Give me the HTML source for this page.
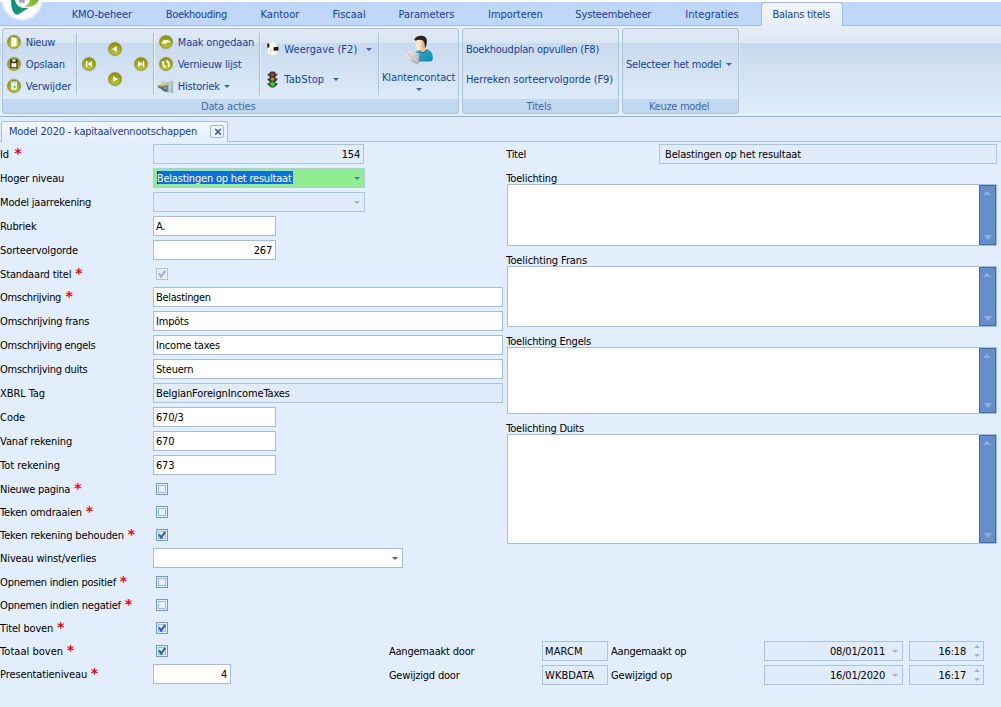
<!DOCTYPE html>
<html lang="nl"><head><meta charset="utf-8"><title>Balans titels</title>
<style>
html,body{margin:0;padding:0}
body{width:1001px;height:707px;overflow:hidden;position:relative;background:#e3eefd;font-family:"DejaVu Sans Condensed","Liberation Sans",sans-serif;font-size:11px;letter-spacing:-0.2px;color:#000;-webkit-font-smoothing:antialiased}
.a{position:absolute;white-space:nowrap;line-height:14px}
.t{position:absolute;white-space:nowrap;line-height:14px;height:14px}
.b{color:#16419a}
.cap{color:#3e6aaa;text-align:center}
.f{position:absolute;box-sizing:border-box;border:1px solid #a3bde3;background:#fff;height:20px}
.ro{background:#e1ecfb;border-color:#abc3e3}
.f span{position:absolute;top:3px;line-height:14px;white-space:nowrap}
.f .l{left:2px}.f .r{right:3px}
.ast{position:absolute;color:#ff0000;font-family:"DejaVu Sans","Liberation Sans",sans-serif;font-weight:bold;font-size:14px;line-height:14px;letter-spacing:0}
.cb{position:absolute;box-sizing:border-box;width:12px;height:12px;border:1px solid #6b9ad9;background:#e9f1fc;box-shadow:inset 0 0 0 1px #e6effc, inset 0 0 0 2px #9dbce6}
.cb svg{position:absolute;left:0;top:0}
.cbd{border-color:#b1c1d8;background:#f0f5fb;box-shadow:inset 0 0 0 1px #eef3fa, inset 0 0 0 2px #dfe7f2}
.sep{position:absolute;width:1px;background:#a5bddc;top:33px;height:62px;box-shadow:1px 0 0 rgba(255,255,255,.55)}
.grp{position:absolute;top:28px;height:86px;box-sizing:border-box;border:1px solid #a9c1de;border-radius:3px;background:linear-gradient(#dfe9f5 0,#dae5f3 14px,#c9daee 14px,#dcebf8 70px,#c3d9f1 70px,#c1d7f0 100%);box-shadow:0 0 0 1px rgba(255,255,255,.5)}
.sb{position:absolute;box-sizing:border-box;width:17px;background:#668ec8;border:1px solid #416aa9}
.ar{position:absolute;width:0;height:0;border-left:3px solid transparent;border-right:3px solid transparent;border-top:3px solid #3c67a8}
svg{position:absolute;overflow:visible}
</style></head><body>

<div class="a" style="left:0;top:0;width:1001px;height:2px;background:#fff"></div>
<div class="a" style="left:0;top:2px;width:1001px;height:23px;background:#bed7fb"></div>
<div class="a" style="left:0;top:25px;width:1001px;height:92px;background:linear-gradient(#e6eef8 0,#dde8f4 17px,#c7d8ed 17px,#d3e3f3 55%,#e0eefa 100%);border-top:1px solid #9fc0ea;border-bottom:1px solid #8db2e3;box-sizing:border-box"></div>
<div class="a" style="left:761px;top:2px;width:82px;height:24px;box-sizing:border-box;border:1px solid #9dbde6;border-bottom:none;border-radius:4px 4px 0 0;background:linear-gradient(#f1f5fb,#e6eef8)"></div>
<div class="t b" style="left:71.7px;top:8px;letter-spacing:-0.13px">KMO-beheer</div>
<div class="t b" style="left:165.7px;top:8px;letter-spacing:-0.32px">Boekhouding</div>
<div class="t b" style="left:260.5px;top:8px;letter-spacing:0.02px">Kantoor</div>
<div class="t b" style="left:332.5px;top:8px;letter-spacing:0.01px">Fiscaal</div>
<div class="t b" style="left:398.6px;top:8px;letter-spacing:-0.10px">Parameters</div>
<div class="t b" style="left:488.1px;top:8px;letter-spacing:-0.04px">Importeren</div>
<div class="t b" style="left:575.3px;top:8px;letter-spacing:-0.15px">Systeembeheer</div>
<div class="t b" style="left:685.3px;top:8px;letter-spacing:0.00px">Integraties</div>
<div class="t b" style="left:772.5px;top:8px;letter-spacing:-0.25px">Balans titels</div>
<svg style="left:0;top:0" width="46" height="24" viewBox="0 0 46 24">
<defs><radialGradient id="lg" cx="50%" cy="50%" r="50%"><stop offset="0.8" stop-color="#fff"/><stop offset="0.9" stop-color="#f1f6fd" stop-opacity=".85"/><stop offset="1" stop-color="#dfe9f6" stop-opacity="0"/></radialGradient>
<linearGradient id="tg" x1="0" x2="1" y1="0" y2="1"><stop offset="0" stop-color="#0b8f86"/><stop offset="1" stop-color="#13a174"/></linearGradient>
<linearGradient id="gg" x1="0" x2="1" y1="1" y2="0"><stop offset="0" stop-color="#9acb3c"/><stop offset="1" stop-color="#6fb52a"/></linearGradient></defs>
<circle cx="22" cy="0" r="21.5" fill="url(#lg)"/>
<path d="M11.3 0 C10.8 5 11.8 10 14 13 C15.5 15 18 15.2 20 13.6 C23 11.6 26 9.6 28.8 7.8 C25 8.3 21 7.9 18.5 6 C16.5 4.5 15.3 2 15.1 0 Z" fill="url(#tg)"/>
<path d="M38.4 0 C38 3 35 5.6 31 6.4 C28.5 6.9 26 6.8 24.3 6.5 C27 5.5 29.6 3 30.2 0 Z" fill="url(#gg)"/>
<path d="M10.6 0 L12 0 L11.6 1.8 Z" fill="#2a8ad8"/>
<rect x="19.4" y="0" width="5.2" height="2.8" rx=".6" fill="#979797"/>
<rect x="21" y="0.6" width="1.8" height="1" fill="#e6e6e6"/>
</svg>
<div class="grp" style="left:2px;width:457px"></div>
<div class="grp" style="left:462px;width:157px"></div>
<div class="grp" style="left:622px;width:117px"></div>
<div class="sep" style="left:76px"></div>
<div class="sep" style="left:153px"></div>
<div class="sep" style="left:259px"></div>
<div class="sep" style="left:378px"></div>
<div class="t cap" style="left:200.9px;top:100px;letter-spacing:-0.13px">Data acties</div>
<div class="t cap" style="left:526.6px;top:100px;letter-spacing:-0.27px">Titels</div>
<div class="t cap" style="left:649.0px;top:100px;letter-spacing:-0.30px">Keuze model</div>
<div class="t b" style="left:25.8px;top:36px;letter-spacing:-0.29px">Nieuw</div>
<div class="t b" style="left:25.8px;top:58px">Opslaan</div>
<div class="t b" style="left:25.8px;top:80px;letter-spacing:-0.07px">Verwijder</div>
<div class="t b" style="left:177.8px;top:36px;letter-spacing:-0.20px">Maak ongedaan</div>
<div class="t b" style="left:177.8px;top:58px;letter-spacing:-0.15px">Vernieuw lijst</div>
<div class="t b" style="left:177.8px;top:80px;letter-spacing:-0.22px">Historiek</div>
<div class="t b" style="left:284.3px;top:43px;letter-spacing:0.05px">Weergave (F2)</div>
<div class="t b" style="left:284.3px;top:73px;letter-spacing:0.13px">TabStop</div>
<div class="t b" style="left:382.0px;top:71px;letter-spacing:-0.12px">Klantencontact</div>
<div class="t b" style="left:466.0px;top:43px;letter-spacing:-0.24px">Boekhoudplan opvullen (F8)</div>
<div class="t b" style="left:466.0px;top:73px;letter-spacing:-0.09px">Herreken sorteervolgorde (F9)</div>
<div class="t b" style="left:626.1px;top:58px;letter-spacing:-0.26px">Selecteer het model</div>
<div class="ar" style="left:224px;top:85px"></div>
<div class="ar" style="left:366px;top:48px"></div>
<div class="ar" style="left:333px;top:78px"></div>
<div class="ar" style="left:416px;top:88px"></div>
<div class="ar" style="left:726px;top:63px"></div>
<svg width="0" height="0"><defs>
<linearGradient id="ol" x1="0" x2="0" y1="0" y2="1"><stop offset="0" stop-color="#8b900d"/><stop offset="0.45" stop-color="#a4a914"/><stop offset="1" stop-color="#c3ca2e"/></linearGradient>
</defs></svg>
<svg style="left:6px;top:34.3px" width="16" height="16" viewBox="-8 -8 16 16"><circle r="7.7" fill="#c4c5bc" opacity=".35"/><circle r="7.1" fill="#b3b4a8" opacity=".9"/><circle r="6.2" fill="url(#ol)" stroke="#80840c" stroke-width=".7"/><path d="M-2.8 -5 L2.6 -4.2 L2.6 4 L-2.8 5 Z" fill="#fff"/><path d="M2.6 -4.2 L3.5 -3.9 L3.5 3.6 L2.6 4Z" fill="#d5d8a6"/></svg>
<svg style="left:6px;top:56.2px" width="16" height="16" viewBox="-8 -8 16 16"><circle r="7.7" fill="#c4c5bc" opacity=".35"/><circle r="7.1" fill="#b3b4a8" opacity=".9"/><circle r="6.2" fill="url(#ol)" stroke="#80840c" stroke-width=".7"/><path d="M-3.8 -4.6 H3.6 V4.2 H-3.8 Z" fill="#333"/><path d="M-2.5 -0.8 H2.4 V3.2 H-2.5 Z" fill="#fff"/><path d="M-1.8 -4.6 H1.6 V-2.4 H-1.8Z" fill="#e4e4e4"/></svg>
<svg style="left:6px;top:78.3px" width="16" height="16" viewBox="-8 -8 16 16"><circle r="7.7" fill="#c4c5bc" opacity=".35"/><circle r="7.1" fill="#b3b4a8" opacity=".9"/><circle r="6.2" fill="url(#ol)" stroke="#80840c" stroke-width=".7"/><path d="M-3.2 -4.4 H3.4 L2.6 4 H-2.4 Z" fill="#e3f0ee"/><path d="M-3.2 -4.4 H3.4 L3.3 -3.2 H-3.1Z" fill="#9fd2e6"/><path d="M-0.6 1.4 L1 -1.2 L1.6 2Z" fill="#4fc23c"/></svg>
<svg style="left:81px;top:56px" width="16" height="16" viewBox="-8 -8 16 16"><circle r="7.7" fill="#c4c5bc" opacity=".35"/><circle r="7.1" fill="#b3b4a8" opacity=".9"/><circle r="6.2" fill="url(#ol)" stroke="#80840c" stroke-width=".7"/><path d="M-3.2 -3 H-1.6 V3 H-3.2Z M3 -3 V3 L-1.6 0Z" fill="#fff"/></svg>
<svg style="left:107.2px;top:41px" width="16" height="16" viewBox="-8 -8 16 16"><circle r="7.7" fill="#c4c5bc" opacity=".35"/><circle r="7.1" fill="#b3b4a8" opacity=".9"/><circle r="6.2" fill="url(#ol)" stroke="#80840c" stroke-width=".7"/><path d="M1.8 -3 V3 L-3 0Z" fill="#fff"/></svg>
<svg style="left:107.2px;top:71px" width="16" height="16" viewBox="-8 -8 16 16"><circle r="7.7" fill="#c4c5bc" opacity=".35"/><circle r="7.1" fill="#b3b4a8" opacity=".9"/><circle r="6.2" fill="url(#ol)" stroke="#80840c" stroke-width=".7"/><path d="M-1.8 -3 V3 L3 0Z" fill="#fff"/></svg>
<svg style="left:133.2px;top:56px" width="16" height="16" viewBox="-8 -8 16 16"><circle r="7.7" fill="#c4c5bc" opacity=".35"/><circle r="7.1" fill="#b3b4a8" opacity=".9"/><circle r="6.2" fill="url(#ol)" stroke="#80840c" stroke-width=".7"/><path d="M3.2 -3 H1.6 V3 H3.2Z M-3 -3 V3 L1.6 0Z" fill="#fff"/></svg>
<svg style="left:158.2px;top:34.3px" width="16" height="16" viewBox="-8 -8 16 16"><circle r="7.7" fill="#c4c5bc" opacity=".35"/><circle r="7.1" fill="#b3b4a8" opacity=".9"/><circle r="6.2" fill="url(#ol)" stroke="#80840c" stroke-width=".7"/><path d="M-4.4 1.6 L-2.4 -2.6 L-1.4 -1.6 C1.4 -2.6 4 -1.4 4.8 0.8 C3 0 1.2 0.2 0 1 L0.6 2 Z" fill="#fff"/></svg>
<svg style="left:158.2px;top:56.099999999999994px" width="16" height="16" viewBox="-8 -8 16 16"><circle r="7.7" fill="#c4c5bc" opacity=".35"/><circle r="7.1" fill="#b3b4a8" opacity=".9"/><circle r="6.2" fill="url(#ol)" stroke="#80840c" stroke-width=".7"/><path d="M-4.6 -1 L-2.8 -3.6 L-1 -1.4 L-2 -1.2 C-2 0.6 -1 1.8 0.2 2.4 L-0.8 4.2 C-3 3.2 -3.8 1.2 -3.6 -1Z M4.6 1 L2.8 3.6 L1 1.4 L2 1.2 C2 -0.6 1 -1.8 -0.2 -2.4 L0.8 -4.2 C3 -3.2 3.8 -1.2 3.6 1Z" fill="#fff"/></svg>
<svg style="left:157px;top:79px" width="18" height="15" viewBox="0 0 18 15">
<defs><linearGradient id="hc" x1="0" x2="1"><stop offset="0" stop-color="#8fa9b1"/><stop offset=".5" stop-color="#c4d7db"/><stop offset="1" stop-color="#8ea7af"/></linearGradient></defs>
<path d="M4.5 2.6 L10 1.2 L15.6 1.9 L16 13.4 L10.6 13.2 L5 10 Z" fill="#9db4bb"/>
<path d="M4.5 2.6 L10 1.2 L15.6 1.9 L10.2 3.2 Z" fill="#e6f0f1"/>
<path d="M10.2 3.2 L15.6 1.9 L16 13.4 L10.6 13.2 Z" fill="url(#hc)"/>
<path d="M4.5 2.6 L10.2 3.2 L10.3 6 L4.6 5.2Z" fill="#b9c9d6"/>
<path d="M0.8 6.6 L8.8 6 L10.4 7 L10.6 13 L6.4 12.2 L3.4 9.6 L0.9 8.6 Z" fill="#5d6d74"/>
<path d="M1 6.8 L8.6 6.4 L9.6 7.4 L2.4 8Z" fill="#8599a3"/>
<ellipse cx="5.6" cy="5.7" rx="2.7" ry="1.25" fill="#f2c81e"/>
<path d="M3.4 5.2 C4.6 4.6 6.6 4.6 7.8 5" stroke="#fbe88a" stroke-width=".6" fill="none"/>
<path d="M7.6 8.4 L9.2 8.2 L9 9.6 L7.4 9.8Z" fill="#dfe6e8"/>
<path d="M16 12.2 L17 13.2 L16 13.6Z" fill="#7c949c"/>
</svg>
<svg style="left:266px;top:40px" width="14" height="17" viewBox="0 0 14 17">
<path d="M2.2 5 C2.2 3 4 2.2 5.4 2.6 L6.4 1.4 L9.2 0.8 L10.2 2.2 L10.4 6.4 L11.6 6.6 L11.8 13.4 C10 15.6 5 16 1.6 14.6 C1.4 11 1.6 8 2.2 5Z" fill="#f6f6f3" stroke="#d4d5d0" stroke-width=".5"/>
<path d="M4.6 8.4 C5 11 5.2 12.4 4.4 13.6" stroke="#c9cbc6" stroke-width=".8" fill="none"/>
<path d="M1.2 4.2 C1.6 3 3 3 3.4 4 L3.4 7 C3 8 1.6 8 1.2 7Z" fill="#1d2a22"/>
<path d="M7.6 7.2 L12.4 6.8 L12.4 10.6 L7.6 10.8Z" fill="#151515"/>
</svg>
<svg style="left:266.5px;top:70.5px" width="11" height="17" viewBox="0 0 11 17">
<path d="M0.4 2.4 L3 3.2 V5.2 L1 4.6Z M10.6 2.4 L8 3.2 V5.2 L10 4.6Z M0.4 7.2 L3 8 V10 L1 9.4Z M10.6 7.2 L8 8 V10 L10 9.4Z M0.4 12 L3 12.8 V14.8 L1 14.2Z M10.6 12 L8 12.8 V14.8 L10 14.2Z" fill="#2c2c2c"/>
<rect x="2.4" y="0.6" width="6.2" height="15.8" rx="1.8" fill="#383838"/>
<circle cx="5.5" cy="3.6" r="1.6" fill="#c7371f"/>
<circle cx="5.5" cy="8.2" r="1.6" fill="#d9900f"/>
<circle cx="5.5" cy="13.2" r="2.7" fill="#2fe52f" opacity=".45"/>
<circle cx="5.5" cy="13.1" r="1.9" fill="#22e022"/>
</svg>
<svg style="left:404px;top:34px" width="32" height="32" viewBox="0 0 32 32">
<defs><linearGradient id="sk" x1="0" x2="1"><stop offset="0" stop-color="#fddcc0"/><stop offset=".45" stop-color="#ffe9d6"/><stop offset="1" stop-color="#e59a68"/></linearGradient>
<linearGradient id="tl" x1="0" x2="1" y1="0" y2="1"><stop offset="0" stop-color="#35b9dc"/><stop offset="1" stop-color="#0b86ad"/></linearGradient>
<linearGradient id="ev" x1="0" x2="1" y1="0" y2="1"><stop offset="0" stop-color="#efefef"/><stop offset=".5" stop-color="#d2d2d2"/><stop offset="1" stop-color="#9d9fa1"/></linearGradient></defs>
<path d="M10 27.6 L10 21 C11 17.6 14 16.2 17 15.7 L22.4 15.3 C26.4 16.2 28.8 19 28.8 24 C28.8 26.6 27.6 27.6 25 27.6 Z" fill="url(#tl)"/>
<path d="M16.4 13.6 L21 13 L22 16.2 C20.4 18.8 17.6 18.6 16 16.6Z" fill="#f3bf96"/>
<path d="M15.4 16.2 C17 19.6 21 19.4 22.8 15.6" stroke="#1c5268" stroke-width=".9" fill="none"/>
<ellipse cx="15.8" cy="10.6" rx="4.7" ry="5.7" fill="url(#sk)"/>
<path d="M10.2 5.4 C12 2.2 16 1.5 19 2 C22.6 2.8 23.5 6 22.6 10 C22.2 12 21.6 13.4 20.8 14.2 C21 11 20.4 8 19 6.5 C17 5.3 14 5.7 11.4 6.8 Z" fill="#2a2320"/>
<path d="M2 17.2 L15 19.6 L15 30.8 L2.4 26.6 Z" fill="url(#ev)"/>
<path d="M2 17.2 L8.8 24.6 L15 19.6" fill="none" stroke="#a9abad" stroke-width=".7"/>
<path d="M2.4 26.6 L7.4 22.8 M15 30.8 L10.4 23.2" fill="none" stroke="#eeeeee" stroke-width=".6"/>
</svg>
<div class="a" style="left:0;top:117px;width:1001px;height:24px;background:#e0ecfb"></div>
<div class="a" style="left:0;top:141px;width:1001px;height:1px;background:#a3c0e8"></div>
<div class="a" style="left:1px;top:121px;width:227px;height:21px;box-sizing:border-box;border:1px solid #a3c0e8;border-bottom:none;border-radius:3px 3px 0 0;background:linear-gradient(#f4f8fe,#e3eefd)"></div>
<div class="t b" style="left:8.9px;top:125px;letter-spacing:-0.21px">Model 2020 - kapitaalvennootschappen</div>
<div class="a" style="left:210px;top:125px;width:14px;height:13px;box-sizing:border-box;border:1px solid #9bb8dd;border-radius:2px;background:#eef4fc"></div>
<svg style="left:213.6px;top:128px" width="8" height="8" viewBox="0 0 8 8"><path d="M1.2 1 L6.8 6.6 M6.8 1 L1.2 6.6" stroke="#2d5fae" stroke-width="1.6" fill="none"/></svg>
<div class="t" style="left:0.1px;top:148px">Id</div>
<div class="ast" style="left:14.3px;top:146px">*</div>
<div class="f ro" style="left:153px;top:144px;width:211px;height:20px;"><span class="r">154</span></div>
<div class="t" style="left:0.1px;top:172px">Hoger niveau</div>
<div class="f" style="left:153px;top:168px;width:212px;height:20px;background:#90ee90;border-color:#b3c6e6"></div>
<div class="a" style="left:157px;top:171px;width:136px;height:13px;background:#0f6fd7"></div>
<div class="a" style="left:157px;top:171px;width:1px;height:13px;background:#2a1a00"></div>
<div class="t" style="left:156.8px;top:172px;color:#fff">Belastingen op het resultaat</div>
<div class="ar" style="left:354px;top:177px;border-top-color:#4b77b5"></div>
<div class="t" style="left:0.1px;top:196px;letter-spacing:-0.19px">Model jaarrekening</div>
<div class="f ro" style="left:153px;top:192px;width:212px;height:20px;"></div>
<div class="ar" style="left:354px;top:201px;border-top-color:#9fb0c6"></div>
<div class="t" style="left:0.1px;top:220px;letter-spacing:-0.17px">Rubriek</div>
<div class="f" style="left:153px;top:216px;width:123px;height:20px;"><span class="l">A.</span></div>
<div class="t" style="left:0.1px;top:244px;letter-spacing:-0.13px">Sorteervolgorde</div>
<div class="f" style="left:153px;top:240px;width:123px;height:20px;"><span class="r">267</span></div>
<div class="t" style="left:0.1px;top:268px;letter-spacing:-0.16px">Standaard titel</div>
<div class="ast" style="left:75.2px;top:266px">*</div>
<div class="cb cbd" style="left:156px;top:268px"><svg width="12" height="12" viewBox="0 0 12 12" style="left:-1px;top:-1px"><path d="M3 5.4 L5.2 8.6 L9.2 2.8" fill="none" stroke="#a3afcc" stroke-width="2.1"/></svg></div>
<div class="t" style="left:0.1px;top:291px;letter-spacing:-0.34px">Omschrijving</div>
<div class="ast" style="left:65.4px;top:289px">*</div>
<div class="f" style="left:153px;top:287px;width:350px"><span class="l" style="letter-spacing:-0.33px">Belastingen</span></div>
<div class="t" style="left:0.1px;top:315px;letter-spacing:-0.23px">Omschrijving frans</div>
<div class="f" style="left:153px;top:311px;width:350px;height:20px;"><span class="l">Impôts</span></div>
<div class="t" style="left:0.1px;top:339px;letter-spacing:-0.29px">Omschrijving engels</div>
<div class="f" style="left:153px;top:335px;width:350px;height:20px;"><span class="l">Income taxes</span></div>
<div class="t" style="left:0.1px;top:363px;letter-spacing:-0.29px">Omschrijving duits</div>
<div class="f" style="left:153px;top:359px;width:350px;height:20px;"><span class="l">Steuern</span></div>
<div class="t" style="left:0.1px;top:387px;letter-spacing:-0.10px">XBRL Tag</div>
<div class="f ro" style="left:153px;top:383px;width:350px"><span class="l" style="letter-spacing:-0.13px">BelgianForeignIncomeTaxes</span></div>
<div class="t" style="left:0.1px;top:411px;letter-spacing:-0.09px">Code</div>
<div class="f" style="left:153px;top:407px;width:123px;height:20px;"><span class="l">670/3</span></div>
<div class="t" style="left:0.1px;top:435px;letter-spacing:-0.13px">Vanaf rekening</div>
<div class="f" style="left:153px;top:431px;width:123px;height:20px;"><span class="l">670</span></div>
<div class="t" style="left:0.1px;top:459px;letter-spacing:-0.02px">Tot rekening</div>
<div class="f" style="left:153px;top:455px;width:123px;height:20px;"><span class="l">673</span></div>
<div class="t" style="left:0.1px;top:483px;letter-spacing:-0.28px">Nieuwe pagina</div>
<div class="ast" style="left:74.2px;top:481px">*</div>
<div class="cb" style="left:156px;top:483px"></div>
<div class="t" style="left:0.1px;top:505.5px;letter-spacing:-0.17px">Teken omdraaien</div>
<div class="ast" style="left:85.7px;top:503.5px">*</div>
<div class="cb" style="left:156px;top:506px"></div>
<div class="t" style="left:0.1px;top:528.5px;letter-spacing:-0.13px">Teken rekening behouden</div>
<div class="ast" style="left:127.8px;top:526.5px">*</div>
<div class="cb" style="left:156px;top:529px"><svg width="12" height="12" viewBox="0 0 12 12" style="left:-1px;top:-1px"><path d="M3 5.4 L5.2 8.6 L9.2 2.8" fill="none" stroke="#2b62b4" stroke-width="2.1"/></svg></div>
<div class="t" style="left:0.1px;top:551.5px;letter-spacing:-0.18px">Niveau winst/verlies</div>
<div class="f" style="left:153px;top:548px;width:250px;height:20px;"></div>
<div class="ar" style="left:392px;top:557px"></div>
<div class="t" style="left:0.1px;top:575.5px;letter-spacing:-0.25px">Opnemen indien positief</div>
<div class="ast" style="left:119.7px;top:573.5px">*</div>
<div class="cb" style="left:156px;top:576px"></div>
<div class="t" style="left:0.1px;top:598.5px;letter-spacing:-0.23px">Opnemen indien negatief</div>
<div class="ast" style="left:124.8px;top:596.5px">*</div>
<div class="cb" style="left:156px;top:599px"></div>
<div class="t" style="left:0.1px;top:621.5px;letter-spacing:-0.17px">Titel boven</div>
<div class="ast" style="left:56.9px;top:619.5px">*</div>
<div class="cb" style="left:156px;top:622px"><svg width="12" height="12" viewBox="0 0 12 12" style="left:-1px;top:-1px"><path d="M3 5.4 L5.2 8.6 L9.2 2.8" fill="none" stroke="#2b62b4" stroke-width="2.1"/></svg></div>
<div class="t" style="left:0.1px;top:644.5px;letter-spacing:0.03px">Totaal boven</div>
<div class="ast" style="left:66.7px;top:642.5px">*</div>
<div class="cb" style="left:156px;top:645px"><svg width="12" height="12" viewBox="0 0 12 12" style="left:-1px;top:-1px"><path d="M3 5.4 L5.2 8.6 L9.2 2.8" fill="none" stroke="#2b62b4" stroke-width="2.1"/></svg></div>
<div class="t" style="left:0.1px;top:667.5px;letter-spacing:-0.13px">Presentatieniveau</div>
<div class="ast" style="left:90.8px;top:665.5px">*</div>
<div class="f" style="left:153px;top:664px;width:78px;height:20px;"><span class="r">4</span></div>
<div class="t" style="left:506.3px;top:148px;letter-spacing:-0.32px">Titel</div>
<div class="f ro" style="left:659px;top:144px;width:338px"><span style="left:5px;letter-spacing:-0.16px">Belastingen op het resultaat</span></div>
<div class="t" style="left:506.3px;top:172px;letter-spacing:-0.18px">Toelichting</div>
<div class="f" style="left:507px;top:184px;width:490px;height:62px"></div>
<div class="sb" style="left:979px;top:185px;height:60px"></div>
<div class="ar" style="left:984px;top:191px;border-top:none;border-bottom:4px solid #8fb0de;border-left-width:4.5px;border-right-width:4.5px;left:983px"></div>
<div class="ar" style="left:984px;top:235px;border-top:5px solid #8fb0de;border-left-width:4px;border-right-width:4px;left:983.5px"></div>
<div class="t" style="left:506.3px;top:253.5px;letter-spacing:-0.09px">Toelichting Frans</div>
<div class="f" style="left:507px;top:266px;width:490px;height:61px"></div>
<div class="sb" style="left:979px;top:267px;height:59px"></div>
<div class="ar" style="left:984px;top:273px;border-top:none;border-bottom:4px solid #8fb0de;border-left-width:4.5px;border-right-width:4.5px;left:983px"></div>
<div class="ar" style="left:984px;top:316px;border-top:5px solid #8fb0de;border-left-width:4px;border-right-width:4px;left:983.5px"></div>
<div class="t" style="left:506.3px;top:334.7px;letter-spacing:-0.22px">Toelichting Engels</div>
<div class="f" style="left:507px;top:347px;width:490px;height:67px"></div>
<div class="sb" style="left:979px;top:348px;height:65px"></div>
<div class="ar" style="left:984px;top:354px;border-top:none;border-bottom:4px solid #8fb0de;border-left-width:4.5px;border-right-width:4.5px;left:983px"></div>
<div class="ar" style="left:984px;top:403px;border-top:5px solid #8fb0de;border-left-width:4px;border-right-width:4px;left:983.5px"></div>
<div class="t" style="left:506.3px;top:421.5px;letter-spacing:-0.23px">Toelichting Duits</div>
<div class="f" style="left:507px;top:434px;width:490px;height:110px"></div>
<div class="sb" style="left:979px;top:435px;height:108px"></div>
<div class="ar" style="left:984px;top:441px;border-top:none;border-bottom:4px solid #8fb0de;border-left-width:4.5px;border-right-width:4.5px;left:983px"></div>
<div class="ar" style="left:984px;top:533px;border-top:5px solid #8fb0de;border-left-width:4px;border-right-width:4px;left:983.5px"></div>
<div class="t" style="left:388.9px;top:645px;letter-spacing:-0.20px">Aangemaakt door</div>
<div class="t" style="left:388.9px;top:668.6px">Gewijzigd door</div>
<div class="f ro" style="left:542px;top:641px;width:66px"><span class="l" style="letter-spacing:0.1px">MARCM</span></div>
<div class="f ro" style="left:542px;top:665px;width:66px"><span class="l" style="letter-spacing:0.1px">WKBDATA</span></div>
<div class="t" style="left:611.1px;top:645px;letter-spacing:-0.24px">Aangemaakt op</div>
<div class="t" style="left:611.1px;top:668.6px">Gewijzigd op</div>
<div class="f ro" style="left:764px;top:641px;width:139px"><span class="r" style="right:17px">08/01/2011</span></div>
<div class="f ro" style="left:764px;top:665px;width:139px"><span class="r" style="right:17px">16/01/2020</span></div>
<div class="ar" style="left:892px;top:650px;border-top-color:#a7b3c4"></div>
<div class="ar" style="left:892px;top:674px;border-top-color:#a7b3c4"></div>
<div class="f ro" style="left:909px;top:641px;width:75px"><span class="r" style="right:17px">16:18</span></div>
<div class="f ro" style="left:909px;top:665px;width:75px"><span class="r" style="right:17px">16:17</span></div>
<div class="ar" style="left:973.5px;top:645px;border-top:none;border-bottom:3px solid #a7b3c4"></div>
<div class="ar" style="left:973.5px;top:654px;border-top-color:#a7b3c4"></div>
<div class="ar" style="left:973.5px;top:669px;border-top:none;border-bottom:3px solid #a7b3c4"></div>
<div class="ar" style="left:973.5px;top:678px;border-top-color:#a7b3c4"></div>
</body></html>
